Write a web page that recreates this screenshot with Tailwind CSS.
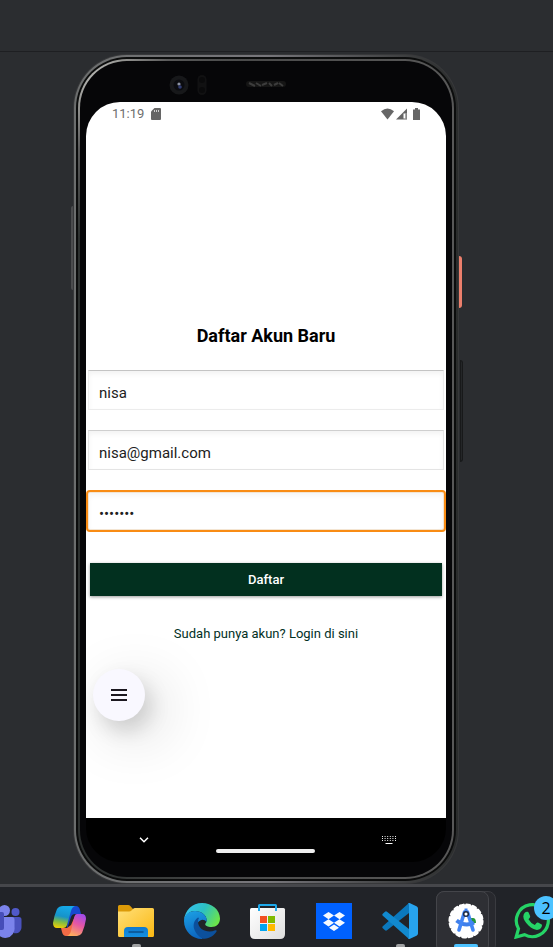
<!DOCTYPE html>
<html lang="id">
<head>
<meta charset="utf-8">
<meta name="viewport" content="width=device-width, initial-scale=1">
<title>Daftar Akun Baru</title>
<script src="https://cdn.jsdelivr.net/npm/@tailwindcss/browser@4"></script>
</head>
<body class="flex min-h-screen flex-col overflow-x-hidden bg-[#2b2d30] font-[Roboto,sans-serif]">
  <header class="h-[52px] shrink-0 border-b border-[#1e1f22]"></header>

  <main class="flex flex-1 flex-col pt-[2px] pr-[94px] pl-[73px]">
    <!-- Phone body: nested metallic rims -->
    <div class="relative flex flex-1 flex-col rounded-[54px] bg-[#37383a] p-px">
      <span class="absolute top-[152px] -left-[2px] h-[84px] w-[2px] rounded-l bg-[#4b4c4e]"></span>
      <span class="absolute top-[202px] -right-[3px] h-[52px] w-[3px] rounded-r-sm bg-[#ec7f6c]"></span>
      <span class="absolute top-[306px] -right-[4px] h-[102px] w-[3px] rounded-r-sm border border-[#18191a] bg-[#242628]"></span>
      <div class="flex flex-1 flex-col rounded-[53px] bg-linear-to-r from-[#6b6d6d] via-[#78777c] to-[#2a2c2c] p-[2px]">
        <div class="flex flex-1 flex-col rounded-[51px] bg-[#0b0c0c] p-[2px]">
          <div class="flex flex-1 flex-col rounded-[49px] bg-[radial-gradient(circle_at_top_left,#c5c5c2_0,#9a9a97_40px,#5a5a5a_90px,transparent_180px),linear-gradient(to_right,#2c302f,#4c4c4c_50%,#585858)] p-[2px]">
            <div class="flex flex-1 flex-col rounded-[47px] bg-[#060608] px-[6px] pb-[15px]">
              <!-- Camera, sensor and speaker -->
              <div class="flex h-[41px] shrink-0 items-center pt-[6px] pl-[83px]">
                <svg class="h-5 w-[130px]" viewBox="0 0 130 20" aria-hidden="true">
                  <circle cx="10" cy="10" r="9.5" fill="#17181a"/><circle cx="10" cy="10" r="5.5" fill="#0b0c10"/>
                  <circle cx="10" cy="9" r="1.6" fill="#8d93a3"/><circle cx="11" cy="12" r="1.8" fill="#303c73"/>
                  <rect x="28.500" y="0" width="9" height="20" rx="4.500" fill="#111112"/><circle cx="33" cy="5" r="3" fill="#0a0a0b"/><circle cx="33" cy="15" r="3" fill="#0a0a0b"/>
                  <rect x="77" y="6" width="40" height="6" rx="3" fill="#151515"/>
                  <path d="M80 8l6 3M87 8l5 3M93 10l5-2M100 8l3 3M105 10l4-2M110 8l4 3" stroke="#3c3c3c" stroke-width="2"/>
                </svg>
              </div>

              <div class="flex flex-1 flex-col overflow-hidden rounded-[34px] bg-black">
                <div class="flex flex-1 flex-col bg-white">
                  <div class="flex h-6 items-center pr-[25px] pl-[26px] text-[13px] text-[#6e6e6e]">
                    <span>11:19</span>
                    <svg class="ml-[7px] h-3 w-[10px]" viewBox="0 0 10 12" aria-hidden="true"><path d="M3.500 0H9a1 1 0 0 1 1 1v10a1 1 0 0 1-1 1H1a1 1 0 0 1-1-1V3.500z" fill="#666"/><path d="M3.500 2v2M5.500 2v2M7.500 2v2" stroke="#fff" stroke-width=".7"/></svg>
                    <svg class="ml-auto h-3 w-10" viewBox="0 0 40 12" fill="#666" aria-hidden="true"><path d="M0 3.300Q6.500-2.300 13 3.300L6.500 11.500z"/><path d="M26 .5V11.500H15z"/><path d="M22.500 5.500h2v5h-2z" fill="#fff"/><path d="M24.500 5h1v6h-1z" fill="#aaa"/><path d="M34 0h3v1.500h2V12h-7V1.500h2z"/></svg>
                  </div>

                  <form class="mt-[198px] flex flex-col">
                    <h1 class="mb-[22px] text-center text-[18px] leading-6 font-bold text-black">Daftar Akun Baru</h1>
                    <div class="flex flex-col gap-5 px-[2px]">
                      <input type="text" aria-label="Nama" value="nisa" class="h-10 w-full border border-[#ececec] border-t-[#c4c4c4] bg-white px-[10px] pt-[5px] text-[15px] text-[#212121] shadow-[inset_0_3px_5px_#0000000d] outline-none">
                      <input type="email" aria-label="Email" value="nisa@gmail.com" class="h-10 w-full border border-[#e4e4e4] border-t-[#cfcfcf] bg-white px-[10px] pt-[5px] text-[15px] text-[#212121] shadow-[inset_0_3px_5px_#0000000d] outline-none">
                      <input type="password" aria-label="Kata sandi" value="rahasia" class="mt-[2px] h-[38px] w-full rounded-xs border border-[#f3e5d3] bg-white px-[10px] pt-[5px] text-[15px] text-[#212121] shadow-[inset_0_3px_5px_#0000000a] outline-2 outline-solid outline-[#f98c14]">
                    </div>
                    <button type="button" class="mx-1 mt-[33px] h-[33px] bg-[#02301f] pt-px text-[13px] font-medium text-white shadow-[0_1px_3px_#00000066]">Daftar</button>
                    <a href="#" class="mt-7 self-center text-[13px] leading-5 text-[#02301f]">Sudah punya akun? Login di sini</a>
                  </form>

                  <button type="button" aria-label="Menu" class="mt-[25px] ml-[7px] flex size-[52px] items-center justify-center rounded-full bg-[#f9f8ff] shadow-[6px_10px_20px_#00000026,16px_14px_60px_#0000002e]">
                    <svg class="h-3 w-4" viewBox="0 0 16 12" fill="#1c1820" aria-hidden="true"><path d="M0 0h16v2H0zM0 5h16v2H0zM0 10h16v2H0z"/></svg>
                  </button>
                </div>

                <nav class="flex h-[44px] shrink-0 items-center justify-between pr-[50px] pl-[53px]">
                  <button type="button" aria-label="Tutup papan ketik"><svg class="h-[6px] w-[10px]" viewBox="0 0 10 6" fill="none" stroke="#fff" stroke-width="1.500" aria-hidden="true"><path d="M1 .8l4 4 4-4"/></svg></button>
                  <span class="mt-[22px] h-1 w-[99px] rounded-full bg-[#eee]"></span>
                  <button type="button" aria-label="Pilih papan ketik"><svg class="h-2 w-[14px]" viewBox="0 0 14 8" fill="none" stroke="#eee" aria-hidden="true"><path d="M0 .5h14M0 2.500h14M0 4.500h14" stroke-dasharray="1 1.600"/><path d="M3.500 7.500h7" stroke="#fff"/></svg></button>
                </nav>
              </div>
            </div>
          </div>
        </div>
      </div>
    </div>
  </main>

  <footer class="h-[63px] shrink-0 overflow-hidden border-t-3 border-[#46474b] bg-[#212328]">
    <div class="-ml-[14px] flex h-full w-max gap-[30px] pt-4">
      <a href="#" aria-label="Teams" class="size-9"><svg viewBox="0 0 36 36" aria-hidden="true"><circle cx="29.500" cy="9" r="4" fill="#5059c9"/><path d="M24 14h9a2.500 2.500 0 0 1 2.500 2.500V24a6 6 0 0 1-8 6z" fill="#4a52bd"/><circle cx="18.500" cy="7.500" r="5.500" fill="#7b83eb"/><path d="M10 14h16a2.500 2.500 0 0 1 2.500 2.500V24a9 9 0 0 1-18.500 3z" fill="#7b83eb"/><rect x="1" y="9" width="17" height="18" rx="2" fill="#464eb8"/></svg></a>
      <a href="#" aria-label="Copilot" class="size-9"><svg viewBox="0 0 36 36" aria-hidden="true">
        <defs><linearGradient id="c1" x1="0.400" y1="0" x2="0.200" y2="1"><stop stop-color="#15a8e8"/><stop offset=".45" stop-color="#1693c9"/><stop offset=".7" stop-color="#7dbb46"/><stop offset="1" stop-color="#f5d000"/></linearGradient>
        <linearGradient id="c2" x1="0.700" y1="0" x2="0.300" y2="1"><stop stop-color="#a34be8"/><stop offset=".45" stop-color="#e556a4"/><stop offset="1" stop-color="#ffae5b"/></linearGradient></defs>
        <path d="M16 3h8q3 0 4 4l1 4h-6q-3 0-4 3l-4 12z" fill="#1749cf"/>
        <path d="M9 25h6l4-3 5-11-4 20q-1 2-4 2h-2q-3 0-4-4z" fill="#f26b46"/>
        <path d="M11 3h12q-3 1-4 5l-4 14q-1 3-4 3H5q-4 0-4-5Q2 13 5 6q2-3 6-3z" fill="url(#c1)"/>
        <path d="M25 11h5q4 0 4 5-1 7-4 14-2 3-5 3H15q3-1 4-5l3-13q1-4 3-4z" fill="url(#c2)"/></svg></a>
      <a href="#" aria-label="File Explorer" class="relative size-9"><svg viewBox="0 0 36 36" aria-hidden="true">
        <defs><linearGradient id="f1" x2="1" y2="1"><stop stop-color="#ffe07a"/><stop offset="1" stop-color="#fbb812"/></linearGradient><linearGradient id="f2" x2="0" y2="1"><stop stop-color="#0f79cf"/><stop offset="1" stop-color="#1490e2"/></linearGradient></defs>
        <path d="M0 3.500Q0 2 1.500 2H10q1.500 0 2.500 1.200L15 6v6H0z" fill="#dc9a08"/><path d="M0 8.500h11q1.500 0 2.500-1L15 6q.8-1 2-1h17.500Q36 5 36 6.500v26q0 1.500-1.500 1.500h-33Q0 34 0 32.500z" fill="url(#f1)"/><path d="M6 34v-6q0-4 4-4h16q4 0 4 4v6z" fill="url(#f2)"/><path d="M11 29h14" stroke="#0a508c" stroke-width="1.500" stroke-linecap="round"/></svg>
        <span class="absolute -bottom-[9px] left-[14px] h-[4px] w-[9px] rounded-full bg-[#a0a1a3]"></span></a>
      <a href="#" aria-label="Edge" class="size-9"><svg viewBox="0 0 36 36" aria-hidden="true">
        <defs><linearGradient id="e1" x1="0" y1=".2" x2="1" y2=".6"><stop stop-color="#35c1f1"/><stop offset=".5" stop-color="#2cc0c2"/><stop offset="1" stop-color="#6be44a"/></linearGradient><linearGradient id="e2" x1="0.300" x2="0.600" y2="1"><stop stop-color="#1b9de2"/><stop offset="1" stop-color="#0b62be"/></linearGradient></defs>
        <path d="M0 17C1 7 8.500 0 18 0c10 0 18 7 18 15.500 0 5-3.500 8.500-8.500 8.500-4 0-6.300-1.400-6.300-2.700 0-1 1.500-1.500 1.500-4C22.700 12 17 8 11 8 6 8 2 11 0 17z" fill="url(#e1)"/>
        <path d="M0 18C0 12 5 8 11 8c6.500 0 11.700 4.500 11.700 9q0 1-.4 2c-1-2-3.800-3-6-1.500-3.500 2-4.500 6-2.500 10 2 5 6.200 8.200 4.200 8.500C8 36 0 28 0 18z" fill="url(#e2)"/>
        <path d="M14 14.500c-4.500 3-5.500 8.500-3 13.500 2.500 5 7 8 9.500 7.800 5.500-.5 9.500-3.300 12-7.300.6-1-.3-1.700-1.300-1.200C24 30.500 14 27 14 18.500q0-2 1-3.500z" fill="#0c509c"/></svg></a>
      <a href="#" aria-label="Microsoft Store" class="size-9"><svg viewBox="0 0 36 36" aria-hidden="true">
        <defs><linearGradient id="s1" x2="1" y2="1"><stop stop-color="#fff"/><stop offset="1" stop-color="#dedede"/></linearGradient></defs>
        <path d="M1.500 5h32q1.500 0 1.500 1.500V31q0 5-5 5H5q-5 0-5-5V6.500Q0 5 1.500 5z" fill="url(#s1)"/><path d="M9 8V2.500Q9 2 9.500 2h16q.5 0 .5.500V8" fill="none" stroke="#1fa9ea" stroke-width="2"/>
        <path d="M10 13h7v7h-7z" fill="#f25022"/><path d="M18 13h7v7h-7z" fill="#7fba00"/><path d="M10 21h7v7h-7z" fill="#00a4ef"/><path d="M18 21h7v7h-7z" fill="#ffb900"/></svg></a>
      <a href="#" aria-label="Dropbox" class="size-9"><svg viewBox="0 0 36 36" aria-hidden="true"><path d="M0 0h36v36H0z" fill="#0061ff"/><path d="M12.500 9l5.500 3.600-5.500 3.600L7 12.600zM23.500 9l5.500 3.600-5.500 3.600-5.500-3.600zM12.500 16.200l5.500 3.600-5.500 3.600L7 19.800zM23.500 16.200l5.500 3.600-5.500 3.600-5.500-3.600zM18 21.500l5 3.200-5 3.300-5-3.300z" fill="#f5f9ff"/></svg></a>
      <a href="#" aria-label="Visual Studio Code" class="relative size-9"><svg viewBox="0 0 36 36" aria-hidden="true">
        <path d="M27 0L.8 23.200q-1 1 0 2L3 27.300q1 .8 2 0L27 10z" fill="#0b78bd"/><path d="M27 36L.8 12.800q-1-1 0-2L3 8.700q1-.8 2 0L27 26z" fill="#1189cf"/><path d="M26 0q.6-.2 1.500 0L34.500 3.300q1.500.8 1.500 2.200v25q0 1.400-1.500 2.200L27.500 36q-.9.200-1.500 0 1-.5 1-2V2q0-1.500-1-2z" fill="#27a3ee"/></svg>
        <span class="absolute -bottom-[9px] left-[14px] h-[4px] w-[9px] rounded-full bg-[#a0a1a3]"></span></a>
      <a href="#" aria-label="Android Studio" class="relative size-9">
        <span class="absolute -top-3 -left-3 h-[62px] w-[60px] rounded-lg border border-[#3a3b40] bg-[#28292e]"></span>
        <span class="absolute -top-3 -left-3 h-[62px] w-[53px] rounded-lg border border-[#44454a] bg-[#2e2f34]"></span>
        <svg class="relative" viewBox="0 0 36 36" aria-hidden="true"><circle cx="18" cy="18" r="16.500" fill="#fff"/><circle cx="18" cy="18" r="16.300" fill="none" stroke="#fff" stroke-width="2.500" stroke-dasharray="3.400 3" stroke-linecap="round"/>
        <path d="M22 15h3q3 0 3 5h-5z" fill="#26963a"/><path d="M8.500 17.500q9 7 17.500 2" fill="none" stroke="#3f7fea" stroke-width="4"/><path d="M16.500 9L11 27M19.500 9L25 27" stroke="#4285f4" stroke-width="3.600" stroke-linecap="round"/><path d="M16.500 5.500h3v4h-3z" fill="#4285f4"/><circle cx="18" cy="11" r="2.300" fill="#fff" stroke="#1d2b45" stroke-width="1.500"/></svg>
        <span class="absolute -bottom-[9px] left-[6px] h-[4px] w-6 rounded-full bg-[#4cc2ff]"></span></a>
      <a href="#" aria-label="WhatsApp" class="relative size-9"><svg viewBox="0 0 36 36" aria-hidden="true"><path d="M2.200 34l2.300-8.300A16 16 0 1 1 10.500 31.600z" fill="none" stroke="#25d366" stroke-width="3.200"/><path d="M11 9.500q1-1 2.500-.8.800.1 1.200 1l1.400 3.300q.3.900-.3 1.700l-1.300 1.600q2.200 4 6.300 5.600l1.700-2q.6-.7 1.500-.3l3.300 1.600q.9.500.7 1.400-.5 3.400-4 4.200-4 .7-9.500-4.300-5-5-5.200-9 .1-2.600 1.700-4z" fill="#25d366"/></svg>
        <span class="absolute -top-[7px] left-5 flex size-6 items-center justify-center rounded-full bg-[#4cc2ff] font-['Open_Sans',sans-serif] text-base text-black">2</span></a>
    </div>
  </footer>
</body>
</html>
